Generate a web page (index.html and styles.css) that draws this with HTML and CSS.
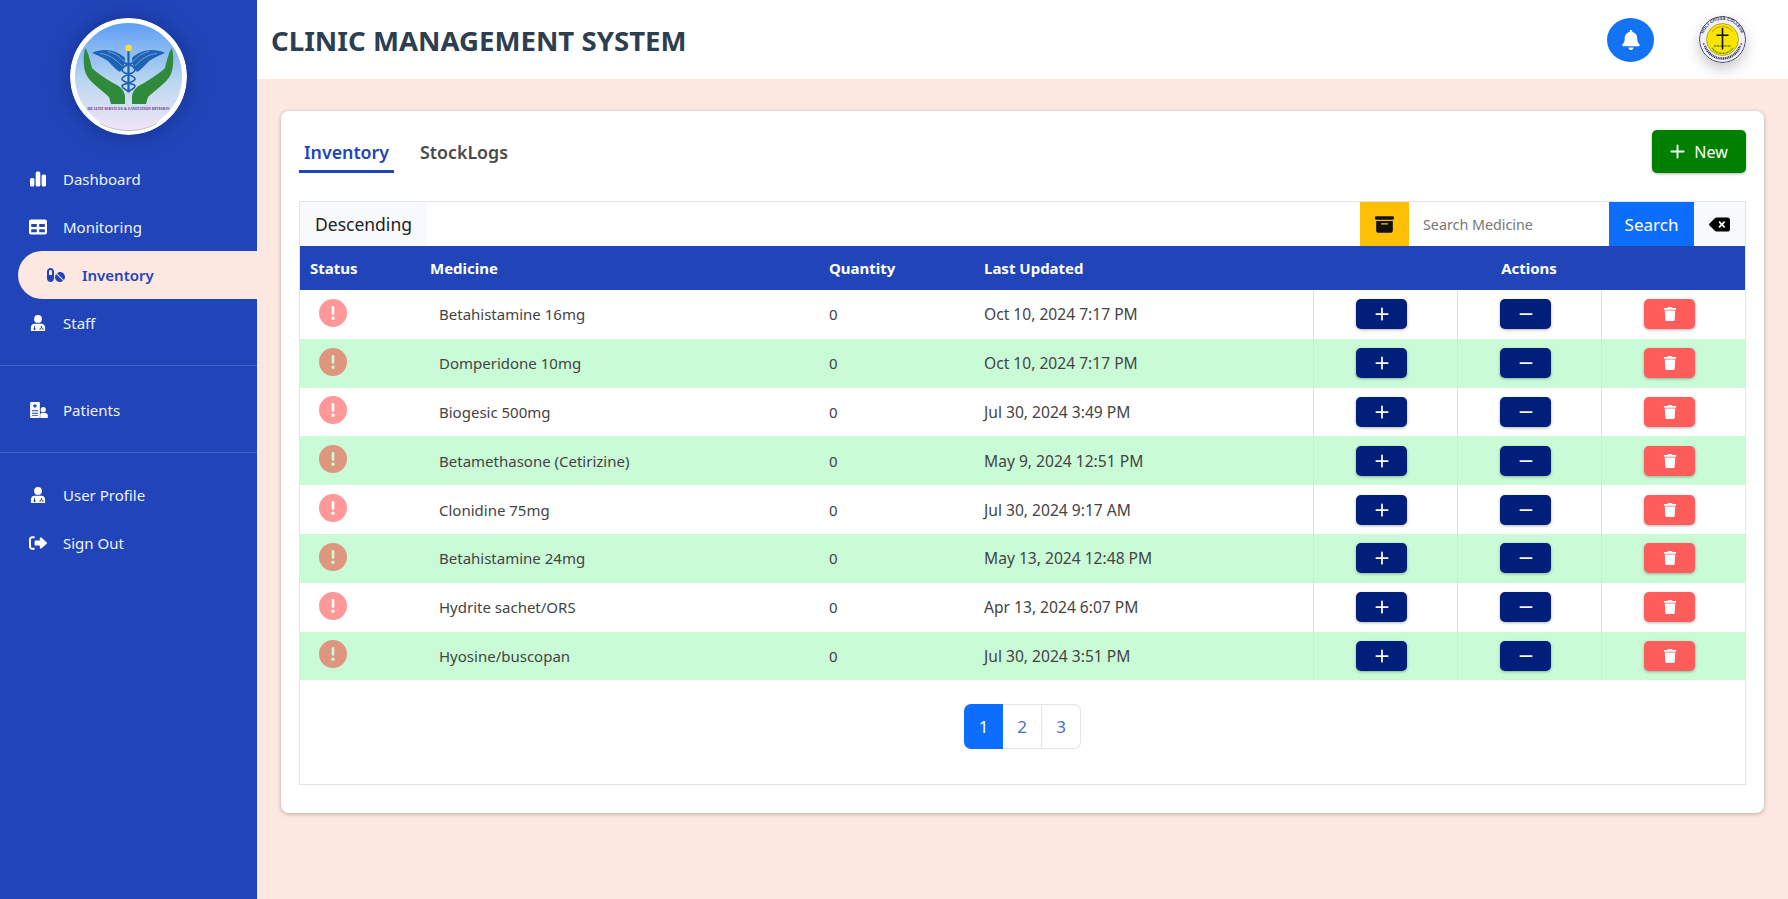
FILE: index.html
```html
<!DOCTYPE html>
<html lang="en">
<head>
<meta charset="utf-8">
<title>Clinic Management System</title>
<link rel="stylesheet" href="styles.css">
</head>
<body>
<svg class="defs" width="0" height="0" aria-hidden="true">
  <defs>
    <symbol id="i-chart" viewBox="0 0 16 16"><rect x="0" y="7" width="4.4" height="8.5" rx="1.6"/><rect x="5.7" y="0.5" width="4.6" height="15" rx="1.6"/><rect x="11.6" y="3.5" width="4.4" height="12" rx="1.6"/></symbol>
    <symbol id="i-table" viewBox="0 0 18 15"><path fill-rule="evenodd" d="M2 0h14a2 2 0 0 1 2 2v11a2 2 0 0 1-2 2H2a2 2 0 0 1-2-2V2a2 2 0 0 1 2-2zM2.2 4.6v3h5.6v-3zm8 0v3h5.6v-3zm-8 5.2v3h5.6v-3zm8 0v3h5.6v-3z"/></symbol>
    <symbol id="i-pills" viewBox="0 0 576 512"><path d="M112 96c-26.5 0-48 21.5-48 48V256h96V144c0-26.5-21.5-48-48-48zM0 144C0 82.1 50.1 32 112 32s112 50.1 112 112V368c0 61.9-50.1 112-112 112S0 429.9 0 368V144zM554.9 399.4c-7.1 12.3-23.7 13.1-33.8 3.1L333.5 214.9c-10-10-9.3-26.7 3.1-33.8C360 167.7 387.1 160 416 160c88.4 0 160 71.6 160 160c0 28.9-7.7 56-21.1 79.4zm-59.5 59.5C472 472.3 444.9 480 416 480c-88.4 0-160-71.6-160-160c0-28.9 7.7-56 21.1-79.4c7.1-12.3 23.7-13.1 33.8-3.1L498.5 425.1c10 10 9.3 26.7-3.1 33.8z"/></symbol>
    <symbol id="i-doctor" viewBox="0 0 16 18"><circle cx="8" cy="4.400" r="4.400"/><path fill-rule="evenodd" d="M4.200 9.800h7.600c2.400 0 4.200 1.900 4.200 4.300V18H0v-3.900c0-2.400 1.800-4.300 4.200-4.300zM3.600 12.400v2.200a1.200 1.200 0 1 0 1 0v-2.200zm7.800 0v1.600c-1 .3-1.600 1-1.600 2v.8h1v-.8c0-1.400 2.400-1.400 2.400 0v.8h1v-.8c0-1-.7-1.700-1.800-2v-1.600z"/></symbol>
    <symbol id="i-patients" viewBox="0 0 20 18"><path fill-rule="evenodd" d="M1 0h9a1 1 0 0 1 1 1v16a1 1 0 0 1-1 1H1a1 1 0 0 1-1-1V1a1 1 0 0 1 1-1zM4.600 2.400v1.300H3.200v1.500h1.400v1.300h1.600V5.200h1.400V3.700H6.200V2.400zM2 9.400v1h7v-1zm0 2.700v1h7v-1zm0 2.700v1h7v-1z"/><circle cx="14.800" cy="8.600" r="2.900"/><path d="M12.600 12.400h4.400c1.700 0 3 1.400 3 3V17a1 1 0 0 1-1 1h-7.600V14c0-.7.500-1.600 1.200-1.600z"/></symbol>
    <symbol id="i-signout" viewBox="0 0 18 16"><path d="M5.600 1.200H3.200C1.400 1.200 0 2.600 0 4.400v7.200c0 1.800 1.400 3.200 3.200 3.200h2.400v-2H3.200A1.200 1.200 0 0 1 2 11.600V4.400c0-.7.500-1.200 1.200-1.200h2.400z"/><path d="M17.600 7.200 12.400 2.600c-.6-.5-1.600-.1-1.600.7v2.300H6.600c-.6 0-1 .5-1 1v2.800c0 .6.400 1 1 1h4.200v2.300c0 .8 1 1.200 1.600.7l5.200-4.600c.5-.5.5-1.200 0-1.600z"/></symbol>
    <symbol id="i-bell" viewBox="0 0 448 512"><path d="M224 512c35.32 0 63.97-28.65 63.97-64H160.03c0 35.35 28.65 64 63.97 64zm215.39-149.71c-19.32-20.76-55.47-51.99-55.47-154.29 0-77.7-54.48-139.9-127.94-155.16V32c0-17.67-14.32-32-31.98-32s-31.98 14.33-31.98 32v20.84C118.56 68.1 64.08 130.3 64.08 208c0 102.3-36.15 133.53-55.47 154.29-6 6.45-8.66 14.16-8.61 21.71.11 16.4 12.98 32 32.1 32h383.8c19.12 0 32-15.6 32.1-32 .05-7.55-2.61-15.27-8.61-21.71z"/></symbol>
    <symbol id="i-archive" viewBox="0 0 512 512"><path d="M32 32H480c17.7 0 32 14.3 32 32V96c0 17.7-14.3 32-32 32H32C14.3 128 0 113.7 0 96V64C0 46.3 14.3 32 32 32zm0 128H480V416c0 35.3-28.7 64-64 64H96c-35.3 0-64-28.7-64-64V160zm128 80c0 8.8 7.2 16 16 16H336c8.8 0 16-7.2 16-16s-7.2-16-16-16H176c-8.8 0-16 7.2-16 16z"/></symbol>
    <symbol id="i-clear" viewBox="0 0 576 512"><path d="M576 128c0-35.3-28.7-64-64-64H205.3c-17 0-33.3 6.7-45.3 18.7L9.4 233.4c-6 6-9.4 14.1-9.4 22.6s3.4 16.6 9.4 22.6L160 429.3c12 12 28.3 18.7 45.3 18.7H512c35.3 0 64-28.7 64-64V128zM271 175c9.4-9.4 24.6-9.4 33.9 0l47 47 47-47c9.4-9.4 24.6-9.4 33.9 0s9.4 24.6 0 33.9l-47 47 47 47c9.4 9.4 9.4 24.6 0 33.9s-24.6 9.4-33.9 0l-47-47-47 47c-9.4 9.4-24.6 9.4-33.9 0s-9.4-24.6 0-33.9l47-47-47-47c-9.4-9.4-9.4-24.6 0-33.9z"/></symbol>
    <symbol id="i-alert" viewBox="0 0 512 512"><path d="M256 512A256 256 0 1 0 256 0a256 256 0 1 0 0 512zm0-384c13.3 0 24 10.7 24 24V264c0 13.3-10.7 24-24 24s-24-10.7-24-24V152c0-13.3 10.7-24 24-24zM224 352a32 32 0 1 1 64 0 32 32 0 1 1 -64 0z"/></symbol>
    <symbol id="i-trash" viewBox="0 0 448 512"><path d="M432 32H312l-9.4-18.7A24 24 0 0 0 281.1 0H166.8a23.72 23.72 0 0 0-21.4 13.3L136 32H16A16 16 0 0 0 0 48v32a16 16 0 0 0 16 16h416a16 16 0 0 0 16-16V48a16 16 0 0 0-16-16zM53.2 467a48 48 0 0 0 47.9 45h245.8a48 48 0 0 0 47.9-45L416 128H32z"/></symbol>
    <symbol id="i-plus" viewBox="0 0 16 16"><path d="M8 1.500v13M1.500 8h13" fill="none" stroke="currentColor" stroke-width="2" stroke-linecap="round"/></symbol>
    <symbol id="i-minus" viewBox="0 0 16 16"><path d="M1.500 8h13" fill="none" stroke="currentColor" stroke-width="2" stroke-linecap="round"/></symbol>
    <linearGradient id="sky" x1="0" y1="0" x2="0" y2="1"><stop offset="0" stop-color="#5a9cf6"/><stop offset=".55" stop-color="#bcd8f0"/><stop offset="1" stop-color="#f2e6f6"/></linearGradient>
    <path id="ring-top" d="M3.800 23.500a19.700 19.700 0 0 1 39.400 0"/>
  </defs>
</svg>

<div class="app">
  <aside class="sidebar">
    <div class="logo-wrap">
      <svg class="logo" viewBox="0 0 117 117" role="img" aria-label="Health Services and Sanitation Division logo">
        <circle cx="58.500" cy="58.500" r="56" fill="url(#sky)" stroke="#fff" stroke-width="5"/>
        <g fill="#2f8a3c">
          <path id="hand" d="M15 30C18 33 20 42 22 50C26 54 36 61 43 65C50 68 54 72 55 78V86H41L39 79C32 72 22 66 17 58C13 50 13 40 15 30Z"/>
          <use href="#hand" transform="translate(117 0) scale(-1 1)"/>
        </g>
        <g fill="#1d62b5">
          <path id="wing" d="M55 40C48 33 35 29 22 35C28 37 33 40 38 43C42 47 46 52 50 54C53 50 55 46 55 40Z"/>
          <use href="#wing" transform="translate(117 0) scale(-1 1)"/>
          <rect x="57.400" y="30" width="2.200" height="44"/>
        </g>
        <path d="M30 35.500C38 36 46 41 52 48M38 33.500C44 35 50 38 54 44M87 35.500C79 36 71 41 65 48M79 33.500C73 35 67 38 63 44" fill="none" stroke="#9cc6f0" stroke-width=".6"/>
        <path d="M52 44c8 3 13 4 13 8s-13 5-13 9 13 4 13 7-4 3-6.500 6M65 44c-8 3-13 4-13 8s13 5 13 9-13 4-13 7 4 3 6.500 6" fill="none" stroke="#1d62b5" stroke-width="1.700"/>
        <circle cx="58.500" cy="30" r="3.200" fill="#f4e23a"/>
        <text class="logo-text" x="58.500" y="91.500" text-anchor="middle" textLength="82" lengthAdjust="spacingAndGlyphs">HEALTH SERVICES &amp; SANITATION DIVISION</text>
        <path d="M30 105c16 10 41 10 57 0" fill="none" stroke="#5a4a80" stroke-width=".4"/>
      </svg>
    </div>
    <nav class="nav">
      <a class="nav-item"><svg class="nav-icon"><use href="#i-chart"/></svg>Dashboard</a>
      <a class="nav-item"><svg class="nav-icon"><use href="#i-table"/></svg>Monitoring</a>
      <a class="nav-item active"><svg class="nav-icon pills"><use href="#i-pills"/></svg>Inventory</a>
      <a class="nav-item"><svg class="nav-icon"><use href="#i-doctor"/></svg>Staff</a>
      <hr class="nav-rule">
      <a class="nav-item"><svg class="nav-icon wide"><use href="#i-patients"/></svg>Patients</a>
      <hr class="nav-rule nav-rule-tight">
      <a class="nav-item"><svg class="nav-icon"><use href="#i-doctor"/></svg>User Profile</a>
      <a class="nav-item"><svg class="nav-icon"><use href="#i-signout"/></svg>Sign Out</a>
    </nav>
  </aside>

  <div class="main">
    <header class="topbar">
      <h1 class="title">CLINIC MANAGEMENT SYSTEM</h1>
      <div class="top-actions">
        <button class="bell" type="button" aria-label="Notifications"><svg class="bell-icon"><use href="#i-bell"/></svg></button>
        <svg class="avatar" viewBox="0 0 47 47" role="img" aria-label="Holy Cross College seal">
          <circle cx="23.500" cy="23.500" r="23" fill="#f1f1f4" stroke="#2b2f6b" stroke-width="1"/>
          <text class="seal-text"><textPath href="#ring-top" startOffset="50%" text-anchor="middle">HOLY CROSS COLLEGE</textPath></text>
          <path d="M6 30a18.500 18.500 0 0 0 35 0" fill="none" stroke="#2b2f6b" stroke-width="2.400" stroke-dasharray="1.100 .7"/>
          <circle cx="23.500" cy="23.500" r="16" fill="#f9e600" stroke="#7d7d20" stroke-width=".6"/>
          <path d="M13 16a13 13 0 0 1 21 0" fill="none" stroke="#b5532a" stroke-width="1" stroke-dasharray=".8 .5"/>
          <path d="M13 32a13 13 0 0 0 21 0M15 30h17" fill="none" stroke="#55701f" stroke-width="1.300" stroke-dasharray=".9 .5"/>
          <path d="M22.700 12h1.600v6.500h5.200v1.500h-5.200v13.500h-1.600V20h-5.200v-1.500h5.200z" fill="#111"/>
          <circle cx="4.700" cy="28" r="1" fill="#e33"/><circle cx="42.300" cy="28" r="1" fill="#e33"/>
        </svg>
      </div>
    </header>

    <section class="content">
      <div class="card">
        <div class="card-head">
          <div class="tabs">
            <a class="tab active">Inventory</a>
            <a class="tab">StockLogs</a>
          </div>
          <button class="btn-new" type="button"><svg class="new-icon"><use href="#i-plus"/></svg>New</button>
        </div>

        <div class="panel">
          <div class="toolbar">
            <div class="sort">Descending</div>
            <div class="search-group">
              <button class="btn-archive" type="button" aria-label="Archive"><svg class="archive-icon"><use href="#i-archive"/></svg></button>
              <input class="search-input" type="text" placeholder="Search Medicine">
              <button class="btn-search" type="button">Search</button>
              <button class="btn-clear" type="button" aria-label="Clear"><svg class="clear-icon"><use href="#i-clear"/></svg></button>
            </div>
          </div>

          <table class="stock">
            <colgroup>
              <col class="c-status"><col class="c-med"><col class="c-qty"><col class="c-date"><col class="c-act"><col class="c-act"><col class="c-act">
            </colgroup>
            <thead>
              <tr><th>Status</th><th>Medicine</th><th>Quantity</th><th>Last Updated</th><th colspan="3" class="th-actions">Actions</th></tr>
            </thead>
            <tbody>
              <tr>
                <td class="td-status"><svg class="alert"><use href="#i-alert"/></svg></td><td class="td-med">Betahistamine 16mg</td><td>0</td><td class="td-date">Oct 10, 2024 7:17 PM</td>
                <td class="td-act"><button class="act navy" type="button" aria-label="Add"><svg class="act-icon"><use href="#i-plus"/></svg></button></td>
                <td class="td-act"><button class="act navy" type="button" aria-label="Remove"><svg class="act-icon"><use href="#i-minus"/></svg></button></td>
                <td class="td-act"><button class="act red" type="button" aria-label="Delete"><svg class="act-icon"><use href="#i-trash"/></svg></button></td>
              </tr>
              <tr>
                <td class="td-status"><svg class="alert"><use href="#i-alert"/></svg></td><td class="td-med">Domperidone 10mg</td><td>0</td><td class="td-date">Oct 10, 2024 7:17 PM</td>
                <td class="td-act"><button class="act navy" type="button" aria-label="Add"><svg class="act-icon"><use href="#i-plus"/></svg></button></td>
                <td class="td-act"><button class="act navy" type="button" aria-label="Remove"><svg class="act-icon"><use href="#i-minus"/></svg></button></td>
                <td class="td-act"><button class="act red" type="button" aria-label="Delete"><svg class="act-icon"><use href="#i-trash"/></svg></button></td>
              </tr>
              <tr>
                <td class="td-status"><svg class="alert"><use href="#i-alert"/></svg></td><td class="td-med">Biogesic 500mg</td><td>0</td><td class="td-date">Jul 30, 2024 3:49 PM</td>
                <td class="td-act"><button class="act navy" type="button" aria-label="Add"><svg class="act-icon"><use href="#i-plus"/></svg></button></td>
                <td class="td-act"><button class="act navy" type="button" aria-label="Remove"><svg class="act-icon"><use href="#i-minus"/></svg></button></td>
                <td class="td-act"><button class="act red" type="button" aria-label="Delete"><svg class="act-icon"><use href="#i-trash"/></svg></button></td>
              </tr>
              <tr>
                <td class="td-status"><svg class="alert"><use href="#i-alert"/></svg></td><td class="td-med">Betamethasone (Cetirizine)</td><td>0</td><td class="td-date">May 9, 2024 12:51 PM</td>
                <td class="td-act"><button class="act navy" type="button" aria-label="Add"><svg class="act-icon"><use href="#i-plus"/></svg></button></td>
                <td class="td-act"><button class="act navy" type="button" aria-label="Remove"><svg class="act-icon"><use href="#i-minus"/></svg></button></td>
                <td class="td-act"><button class="act red" type="button" aria-label="Delete"><svg class="act-icon"><use href="#i-trash"/></svg></button></td>
              </tr>
              <tr>
                <td class="td-status"><svg class="alert"><use href="#i-alert"/></svg></td><td class="td-med">Clonidine 75mg</td><td>0</td><td class="td-date">Jul 30, 2024 9:17 AM</td>
                <td class="td-act"><button class="act navy" type="button" aria-label="Add"><svg class="act-icon"><use href="#i-plus"/></svg></button></td>
                <td class="td-act"><button class="act navy" type="button" aria-label="Remove"><svg class="act-icon"><use href="#i-minus"/></svg></button></td>
                <td class="td-act"><button class="act red" type="button" aria-label="Delete"><svg class="act-icon"><use href="#i-trash"/></svg></button></td>
              </tr>
              <tr>
                <td class="td-status"><svg class="alert"><use href="#i-alert"/></svg></td><td class="td-med">Betahistamine 24mg</td><td>0</td><td class="td-date">May 13, 2024 12:48 PM</td>
                <td class="td-act"><button class="act navy" type="button" aria-label="Add"><svg class="act-icon"><use href="#i-plus"/></svg></button></td>
                <td class="td-act"><button class="act navy" type="button" aria-label="Remove"><svg class="act-icon"><use href="#i-minus"/></svg></button></td>
                <td class="td-act"><button class="act red" type="button" aria-label="Delete"><svg class="act-icon"><use href="#i-trash"/></svg></button></td>
              </tr>
              <tr>
                <td class="td-status"><svg class="alert"><use href="#i-alert"/></svg></td><td class="td-med">Hydrite sachet/ORS</td><td>0</td><td class="td-date">Apr 13, 2024 6:07 PM</td>
                <td class="td-act"><button class="act navy" type="button" aria-label="Add"><svg class="act-icon"><use href="#i-plus"/></svg></button></td>
                <td class="td-act"><button class="act navy" type="button" aria-label="Remove"><svg class="act-icon"><use href="#i-minus"/></svg></button></td>
                <td class="td-act"><button class="act red" type="button" aria-label="Delete"><svg class="act-icon"><use href="#i-trash"/></svg></button></td>
              </tr>
              <tr>
                <td class="td-status"><svg class="alert"><use href="#i-alert"/></svg></td><td class="td-med">Hyosine/buscopan</td><td>0</td><td class="td-date">Jul 30, 2024 3:51 PM</td>
                <td class="td-act"><button class="act navy" type="button" aria-label="Add"><svg class="act-icon"><use href="#i-plus"/></svg></button></td>
                <td class="td-act"><button class="act navy" type="button" aria-label="Remove"><svg class="act-icon"><use href="#i-minus"/></svg></button></td>
                <td class="td-act"><button class="act red" type="button" aria-label="Delete"><svg class="act-icon"><use href="#i-trash"/></svg></button></td>
              </tr>
            </tbody>
          </table>

          <div class="pager">
            <a class="page current">1</a><a class="page">2</a><a class="page">3</a>
          </div>
        </div>
      </div>
    </section>
  </div>
</div>
</body>
</html>
```
FILE: styles.css
```css
* { box-sizing: border-box; }
html, body { margin: 0; height: 100%; }
body {
  font-family: "Noto Sans", "Liberation Sans", sans-serif;
  font-size: 15px;
  color: #444;
  background: #fde8e1;
  overflow: hidden;
}
.defs { position: absolute; }
button { font-family: inherit; border: 0; padding: 0; cursor: pointer; }
.app { display: flex; height: 899px; }

/* Sidebar */
.sidebar { width: 257px; flex: none; background: #2145b9; color: #fff; }
.logo-wrap { display: flex; justify-content: center; padding-top: 18px; height: 155px; }
.logo { width: 117px; height: 117px; border-radius: 50%; box-shadow: 0 0 22px rgba(10, 25, 90, .45); }
.logo-text { font: 700 4.2px "Liberation Serif", serif; fill: #5b2b86; }
.nav { display: flex; flex-direction: column; }
.nav-item {
  display: flex; align-items: center; height: 48px; padding-left: 29px;
  color: #eef2ff; font-size: 15px; white-space: nowrap;
}
.nav-icon { width: 18px; height: 16px; fill: #fff; margin-right: 16px; flex: none; }
.nav-icon.wide { width: 20px; margin-right: 14px; }
.nav-item.active {
  margin-left: 18px; padding-left: 28px; background: #fde8e1; color: #2145b9;
  font-weight: 600; border-radius: 24px 0 0 24px;
}
.nav-icon.pills { width: 20px; fill: #2145b9; }
.nav-rule { width: 100%; margin: 18px 0 20px; border: 0; border-top: 1px solid #4263cc; height: 0; }
.nav-rule-tight { margin: 18px 0; }

/* Top bar */
.main { flex: 1; min-width: 0; display: flex; flex-direction: column; }
.topbar {
  height: 79px; flex: none; background: #fff; display: flex; align-items: center;
  justify-content: space-between; padding: 0 42px 0 14px;
}
.title { margin: 0; font-size: 27.600px; font-weight: 700; color: #2c3e50; }
.top-actions { display: flex; align-items: center; gap: 45px; }
.bell { width: 47px; height: 44px; border-radius: 50%; background: #1273f5; display: flex; align-items: center; justify-content: center; }
.bell-icon { width: 18px; height: 20px; fill: #fff; }
.avatar { width: 47px; height: 47px; border-radius: 50%; box-shadow: 0 6px 14px rgba(0, 0, 0, .22); }
.seal-text { font: 700 4.300px "Liberation Sans", sans-serif; fill: #2b2f6b; }

/* Card */
.content { padding: 32px 24px 0 24px; }
.card {
  height: 702px; background: #fff; border-radius: 8px; padding: 19px 18px 28px;
  box-shadow: 0 1px 4px rgba(0, 0, 0, .28); display: flex; flex-direction: column;
}
.card-head { display: flex; justify-content: space-between; align-items: flex-start; height: 71px; flex: none; }
.tabs { display: flex; gap: 21px; height: 43px; }
.tab {
  display: flex; align-items: center; padding: 3px 5px 0; height: 43px; font-size: 17.800px;
  font-weight: 600; color: #4a4a4a; border-bottom: 3px solid transparent;
}
.tab.active { color: #2145b9; border-bottom-color: #2145b9; }
.btn-new {
  width: 94px; height: 43px; background: #008000; color: #fff; border-radius: 5px; font-size: 16px;
  display: flex; align-items: center; justify-content: center; gap: 9px;
  box-shadow: 0 1px 3px rgba(0, 0, 0, .3);
}
.new-icon { width: 15px; height: 15px; }

/* Panel */
.panel { flex: 1; border: 1px solid #e3e4e8; display: flex; flex-direction: column; }
.toolbar { display: flex; justify-content: space-between; height: 44px; flex: none; }
.sort { width: 127px; background: #f8f9fa; color: #222; font-size: 17.500px; display: flex; align-items: center; padding-left: 15px; }
.search-group { display: flex; }
.btn-archive { width: 49px; background: #ffc107; display: flex; align-items: center; justify-content: center; }
.archive-icon { width: 19px; height: 19px; fill: #111; }
.search-input {
  width: 200px; border: 0; padding: 0 14px; font: 14.300px "Noto Sans", sans-serif; color: #444; outline: 0;
}
.search-input::placeholder { color: #777; opacity: 1; }
.btn-search { width: 85px; background: #0d6efd; color: #fff; font-size: 17px; }
.btn-clear { width: 51px; background: #f8f9fa; display: flex; align-items: center; justify-content: center; }
.clear-icon { width: 21px; height: 19px; fill: #000; }

/* Table */
.stock { width: 100%; border-collapse: collapse; table-layout: fixed; }
.c-status { width: 120px; }
.c-med { width: 399px; }
.c-qty { width: 155px; }
.c-date { width: 339px; }
.c-act { width: 144px; }
.stock th {
  height: 44px; background: #2145b9; color: #fff; font-size: 15px; font-weight: 700; text-align: left; padding: 0 10px;
}
.stock th.th-actions { text-align: center; }
.stock td { height: 48.800px; padding: 0 10px; font-size: 15px; color: #444; }
.stock tbody tr:nth-child(even) td { background: #c8fbd6; }
.stock td.td-med { padding-left: 19px; }
.stock td.td-date { font-size: 15.600px; }
.stock td.td-status { padding: 0 0 3px 19px; line-height: 0; }
.alert { width: 28px; height: 28px; fill: #ff0000; opacity: .4; }
.stock td.td-act { border-left: 1px solid #dcdee3; text-align: center; padding: 0 7px 0 0; line-height: 0; }
.act { width: 51px; height: 30px; border-radius: 5px; color: #fff; box-shadow: 0 1px 3px rgba(0, 0, 0, .3); display: inline-flex; align-items: center; justify-content: center; }
.act.navy { background: #001f7a; }
.act.red { background: #ff5c5c; }
.act-icon { width: 14px; height: 14px; fill: #fff; }

/* Pagination */
.pager { display: flex; justify-content: center; padding-top: 24px; }
.page {
  width: 39px; height: 45px; border: 1px solid #e3e5ea; border-left: 0; display: flex;
  align-items: center; justify-content: center; font-size: 17px; color: #4a6fd0; background: #fff;
}
.page:last-child { border-radius: 0 7px 7px 0; }
.page.current { background: #0d6efd; color: #fff; border: 0; border-radius: 7px 0 0 7px; }
```
